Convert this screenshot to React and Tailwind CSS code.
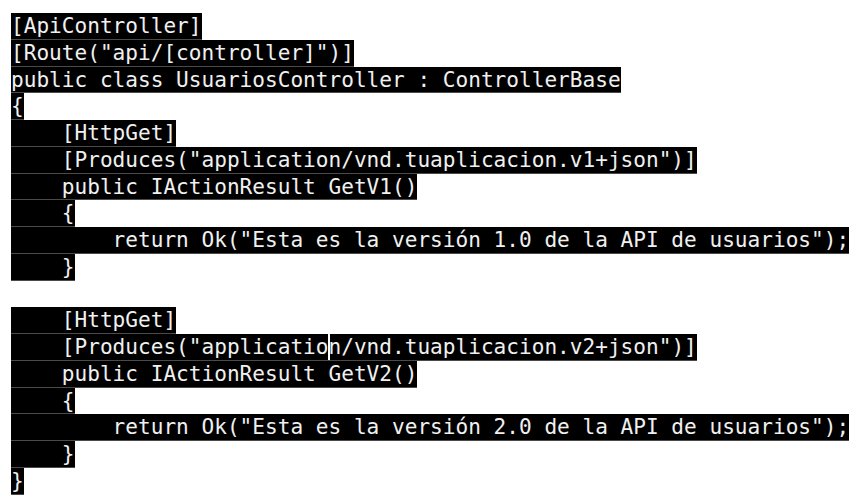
import React from "react";

const lines = [
  "[ApiController]",
  '[Route("api/[controller]")]',
  "public class UsuariosController : ControllerBase",
  "{",
  "    [HttpGet]",
  '    [Produces("application/vnd.tuaplicacion.v1+json")]',
  "    public IActionResult GetV1()",
  "    {",
  '        return Ok("Esta es la versión 1.0 de la API de usuarios");',
  "    }",
  null,
  "    [HttpGet]",
  "CARET",
  "    public IActionResult GetV2()",
  "    {",
  '        return Ok("Esta es la versión 2.0 de la API de usuarios");',
  "    }",
  "}",
];

function Row({ children, empty }) {
  return (
    <div className="h-[26.78px]">
      {!empty && (
        <div className="h-full w-fit bg-black border-b border-[#4a4a4a] box-border leading-[26px] whitespace-pre text-[#f0f0f0]">
          {children}
        </div>
      )}
    </div>
  );
}

export default function App() {
  return (
    <div className="w-[863px] h-[503px] bg-white overflow-hidden pl-[11px] pt-[13px] font-['DejaVu_Sans_Mono',monospace] text-[21.1px]">
      {lines.map((l, i) => {
        if (l === null) return <Row key={i} empty />;
        if (l === "CARET")
          return (
            <Row key={i}>
              {'    [Produces("applicatio'}
              <span className="relative inline-block w-0 h-full align-top">
                <span className="absolute left-[-1px] top-0 w-[2px] h-[26px] bg-white" />
              </span>
              {'n/vnd.tuaplicacion.v2+json")]'}
            </Row>
          );
        return <Row key={i}>{l}</Row>;
      })}
    </div>
  );
}
